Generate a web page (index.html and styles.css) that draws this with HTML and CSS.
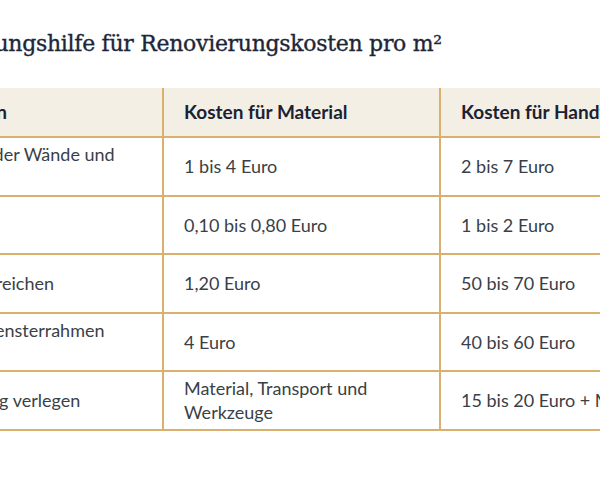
FILE: index.html
```html
<!DOCTYPE html>
<html lang="de">
<head>
<meta charset="utf-8">
<title>Orientierungshilfe für Renovierungskosten</title>
<link rel="stylesheet" href="styles.css">
</head>
<body>
<article class="article">
  <h2 class="title">Orientierungshilfe für Renovierungskosten pro m²</h2>
  <table class="costs">
    <colgroup>
      <col class="c1"><col class="c2"><col class="c3">
    </colgroup>
    <thead>
      <tr>
        <th>Leistungen</th>
        <th>Kosten für Material</th>
        <th>Kosten für Handwerker</th>
      </tr>
    </thead>
    <tbody>
      <tr>
        <td>Streichen der Wände und<br>Decken</td>
        <td>1 bis 4 Euro</td>
        <td>2 bis 7 Euro</td>
      </tr>
      <tr>
        <td>Tapezieren</td>
        <td>0,10 bis 0,80 Euro</td>
        <td>1 bis 2 Euro</td>
      </tr>
      <tr>
        <td>Fassade streichen</td>
        <td>1,20 Euro</td>
        <td>50 bis 70 Euro</td>
      </tr>
      <tr>
        <td>Anstrich Fensterrahmen<br>(Holz)</td>
        <td>4 Euro</td>
        <td>40 bis 60 Euro</td>
      </tr>
      <tr>
        <td>Bodenbelag verlegen</td>
        <td>Material, Transport und<br>Werkzeuge</td>
        <td>15 bis 20 Euro + Material</td>
      </tr>
    </tbody>
  </table>
</article>
</body>
</html>
```
FILE: styles.css
```css
html, body {
  margin: 0;
  background: #ffffff;
}
body {
  overflow: hidden;
  width: 600px;
  height: 480px;
}
.article {
  margin-left: -105px;
  width: 900px;
  padding-top: 30px;
}
.title {
  margin: 0 0 30px;
  font-family: "DejaVu Serif", serif;
  font-weight: 400;
  font-size: 22px;
  letter-spacing: -0.3px;
  line-height: 28px;
  color: #1d2637;
  -webkit-text-stroke: 0.35px #1d2637;
}
.costs {
  border-collapse: collapse;
  table-layout: fixed;
  width: 822px;
  font-family: Lato, "Noto Sans", sans-serif;
  font-size: 18px;
  line-height: 24px;
  color: #3a3f48;
}
.c1 { width: 268px; }
.c2 { width: 277px; }
.c3 { width: 277px; }
.costs th {
  background: #f4efe5;
  color: #1b2233;
  font-weight: 700;
  font-size: 19px;
  text-align: left;
  padding: 12px 20px;
  border-bottom: 2px solid #d9b06f;
}
.costs td {
  height: 48px;
  padding: 4.25px 20px;
  vertical-align: middle;
  border-bottom: 2px solid #d9b06f;
}
.costs th + th,
.costs td + td {
  border-left: 2px solid #d9b06f;
}
```
